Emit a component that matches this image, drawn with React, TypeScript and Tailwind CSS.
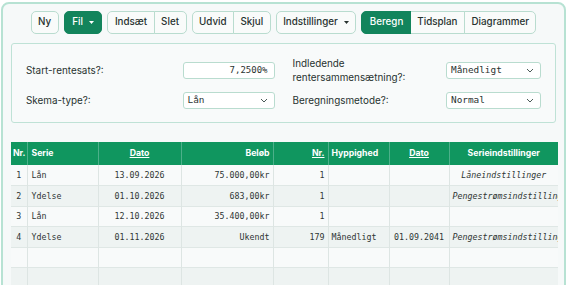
import React from "react";

const sans = "font-['Inter','Noto_Sans',sans-serif]";
const mono = "font-['DejaVu_Sans_Mono','Liberation_Mono',monospace]";

type Row = {
  nr: string;
  serie: string;
  dato: string;
  belob: string;
  antal: string;
  hyppighed: string;
  slut: string;
  settings: string;
};

const ROWS: Row[] = [
  { nr: "1", serie: "Lån", dato: "13.09.2026", belob: "75.000,00kr", antal: "1", hyppighed: "", slut: "", settings: "Låneindstillinger" },
  { nr: "2", serie: "Ydelse", dato: "01.10.2026", belob: "683,00kr", antal: "1", hyppighed: "", slut: "", settings: "Pengestrømsindstillinger" },
  { nr: "3", serie: "Lån", dato: "12.10.2026", belob: "35.400,00kr", antal: "1", hyppighed: "", slut: "", settings: "" },
  { nr: "4", serie: "Ydelse", dato: "01.11.2026", belob: "Ukendt", antal: "179", hyppighed: "Månedligt", slut: "01.09.2041", settings: "Pengestrømsindstillinger" },
  { nr: "", serie: "", dato: "", belob: "", antal: "", hyppighed: "", slut: "", settings: "" },
  { nr: "", serie: "", dato: "", belob: "", antal: "", hyppighed: "", slut: "", settings: "" },
];

function Caret() {
  return (
    <svg width="5" height="3" viewBox="0 0 5 3" className="ml-[6px]">
      <path d="M0 0 L5 0 L2.5 3 Z" fill="currentColor" />
    </svg>
  );
}

function Chevron() {
  return (
    <svg width="8" height="5" viewBox="0 0 8 5" className="text-[#4b5a57]">
      <path d="M1 1 L4 4 L7 1" fill="none" stroke="currentColor" strokeWidth="1" />
    </svg>
  );
}

const btn =
  "h-[23px] flex items-center px-[6.5px] text-[9.8px] font-medium text-[#27322f] bg-[#f9fbfa] border border-[#b9dccf]";
const green =
  "h-[23px] flex items-center px-[7.5px] text-[9.8px] font-medium text-white bg-[#12845c] border border-[#12845c]";

function Select({ value, width }: { value: string; width: string }) {
  return (
    <div
      className={`${width} h-[17px] flex items-center justify-between pl-[4px] pr-[6px] bg-white border border-[#b9dccf] rounded-[3px] ${mono} text-[9.4px] text-[#2b3331]`}
    >
      <span>{value}</span>
      <Chevron />
    </div>
  );
}

export default function App() {
  return (
    <div className={`min-h-screen bg-white pt-[2px] pl-[1px] pr-[4px] ${sans}`}>
      <div className="h-[300px] border-2 border-[#b7e2d3] rounded-[8px] bg-[#f6f9f9] px-[8px] pt-[7px]">
        {/* toolbar */}
        <div className="flex justify-center gap-[5px]">
          <div className={`${btn} rounded-[5px]`}>Ny</div>
          <div className={`${green} rounded-[5px]`}>
            Fil
            <Caret />
          </div>
          <div className="flex">
            <div className={`${btn} rounded-l-[5px]`}>Indsæt</div>
            <div className={`${btn} -ml-px rounded-r-[5px]`}>Slet</div>
          </div>
          <div className="flex">
            <div className={`${btn} rounded-l-[5px]`}>Udvid</div>
            <div className={`${btn} -ml-px rounded-r-[5px]`}>Skjul</div>
          </div>
          <div className={`${btn} rounded-[5px]`}>
            Indstillinger
            <Caret />
          </div>
          <div className="flex">
            <div className={`${green} rounded-l-[5px]`}>Beregn</div>
            <div className={`${btn} -ml-px border-l-0`}>Tidsplan</div>
            <div className={`${btn} -ml-px rounded-r-[5px]`}>Diagrammer</div>
          </div>
        </div>

        {/* settings panel */}
        <div className="mt-[9px] border border-[#bfe2d6] rounded-[3px] bg-[#f8fafa] px-[14px] pt-[12px] pb-[12px] grid grid-cols-2 gap-x-[18px] gap-y-[6px] text-[9.9px] text-[#27322f] leading-[14px]">
          <div className="h-[28px] flex items-center justify-between">
            <span>Start-rentesats?:</span>
            <div className={`w-[92px] h-[17px] flex items-center justify-end pr-[6px] bg-white border border-[#b9dccf] rounded-[3px] ${mono} text-[9px] text-[#2b3331]`}>
              7,2500%
            </div>
          </div>
          <div className="h-[28px] flex items-center justify-between">
            <span>
              Indledende
              <br />
              rentersammensætning?:
            </span>
            <Select value="Månedligt" width="w-[95px]" />
          </div>
          <div className="h-[20px] flex items-center justify-between">
            <span>Skema-type?:</span>
            <Select value="Lån" width="w-[92px]" />
          </div>
          <div className="h-[20px] flex items-center justify-between">
            <span>Beregningsmetode?:</span>
            <Select value="Normal" width="w-[95px]" />
          </div>
        </div>

        {/* schedule table */}
        <table className="mt-[19px] w-[547px] table-fixed border-collapse">
          <colgroup>
            <col className="w-[16px]" />
            <col className="w-[71px]" />
            <col className="w-[83px]" />
            <col className="w-[92px]" />
            <col className="w-[55px]" />
            <col className="w-[61px]" />
            <col className="w-[60px]" />
            <col className="w-[109px]" />
          </colgroup>
          <thead>
            <tr className="h-[23px] bg-[#10965f] text-white text-[8.7px] font-semibold">
              <th className="border-r border-[#4cb08a] px-[2px] text-center">Nr.</th>
              <th className="border-r border-[#4cb08a] px-[4px] text-left">Serie</th>
              <th className="border-r border-[#4cb08a] px-[3px] text-center underline">Dato</th>
              <th className="border-r border-[#4cb08a] px-[3px] text-right">Beløb</th>
              <th className="border-r border-[#4cb08a] px-[3px] text-right underline">Nr.</th>
              <th className="border-r border-[#4cb08a] px-[3px] text-left">Hyppighed</th>
              <th className="border-r border-[#4cb08a] px-[3px] text-center underline">Dato</th>
              <th className="px-[3px] text-center">Serieindstillinger</th>
            </tr>
          </thead>
          <tbody className={`${mono} text-[8.3px] text-[#2f3634]`}>
            {ROWS.map((r, i) => (
              <tr
                key={i}
                className={`h-[20.5px] border-b border-[#dfe7e5] ${i % 2 === 0 ? "bg-[#f8fafa]" : "bg-[#eef3f2]"}`}
              >
                <td className="border-r border-[#dde5e3] text-center">{r.nr}</td>
                <td className="border-r border-[#dde5e3] px-[4px]">{r.serie}</td>
                <td className="border-r border-[#dde5e3] text-center">{r.dato}</td>
                <td className="border-r border-[#dde5e3] px-[3px] text-right">{r.belob}</td>
                <td className="border-r border-[#dde5e3] px-[3px] text-right">{r.antal}</td>
                <td className="border-r border-[#dde5e3] px-[3px]">{r.hyppighed}</td>
                <td className="border-r border-[#dde5e3] text-center">{r.slut}</td>
                <td className="px-[3px] text-center italic whitespace-nowrap overflow-hidden">{r.settings}</td>
              </tr>
            ))}
          </tbody>
        </table>
      </div>
    </div>
  );
}
